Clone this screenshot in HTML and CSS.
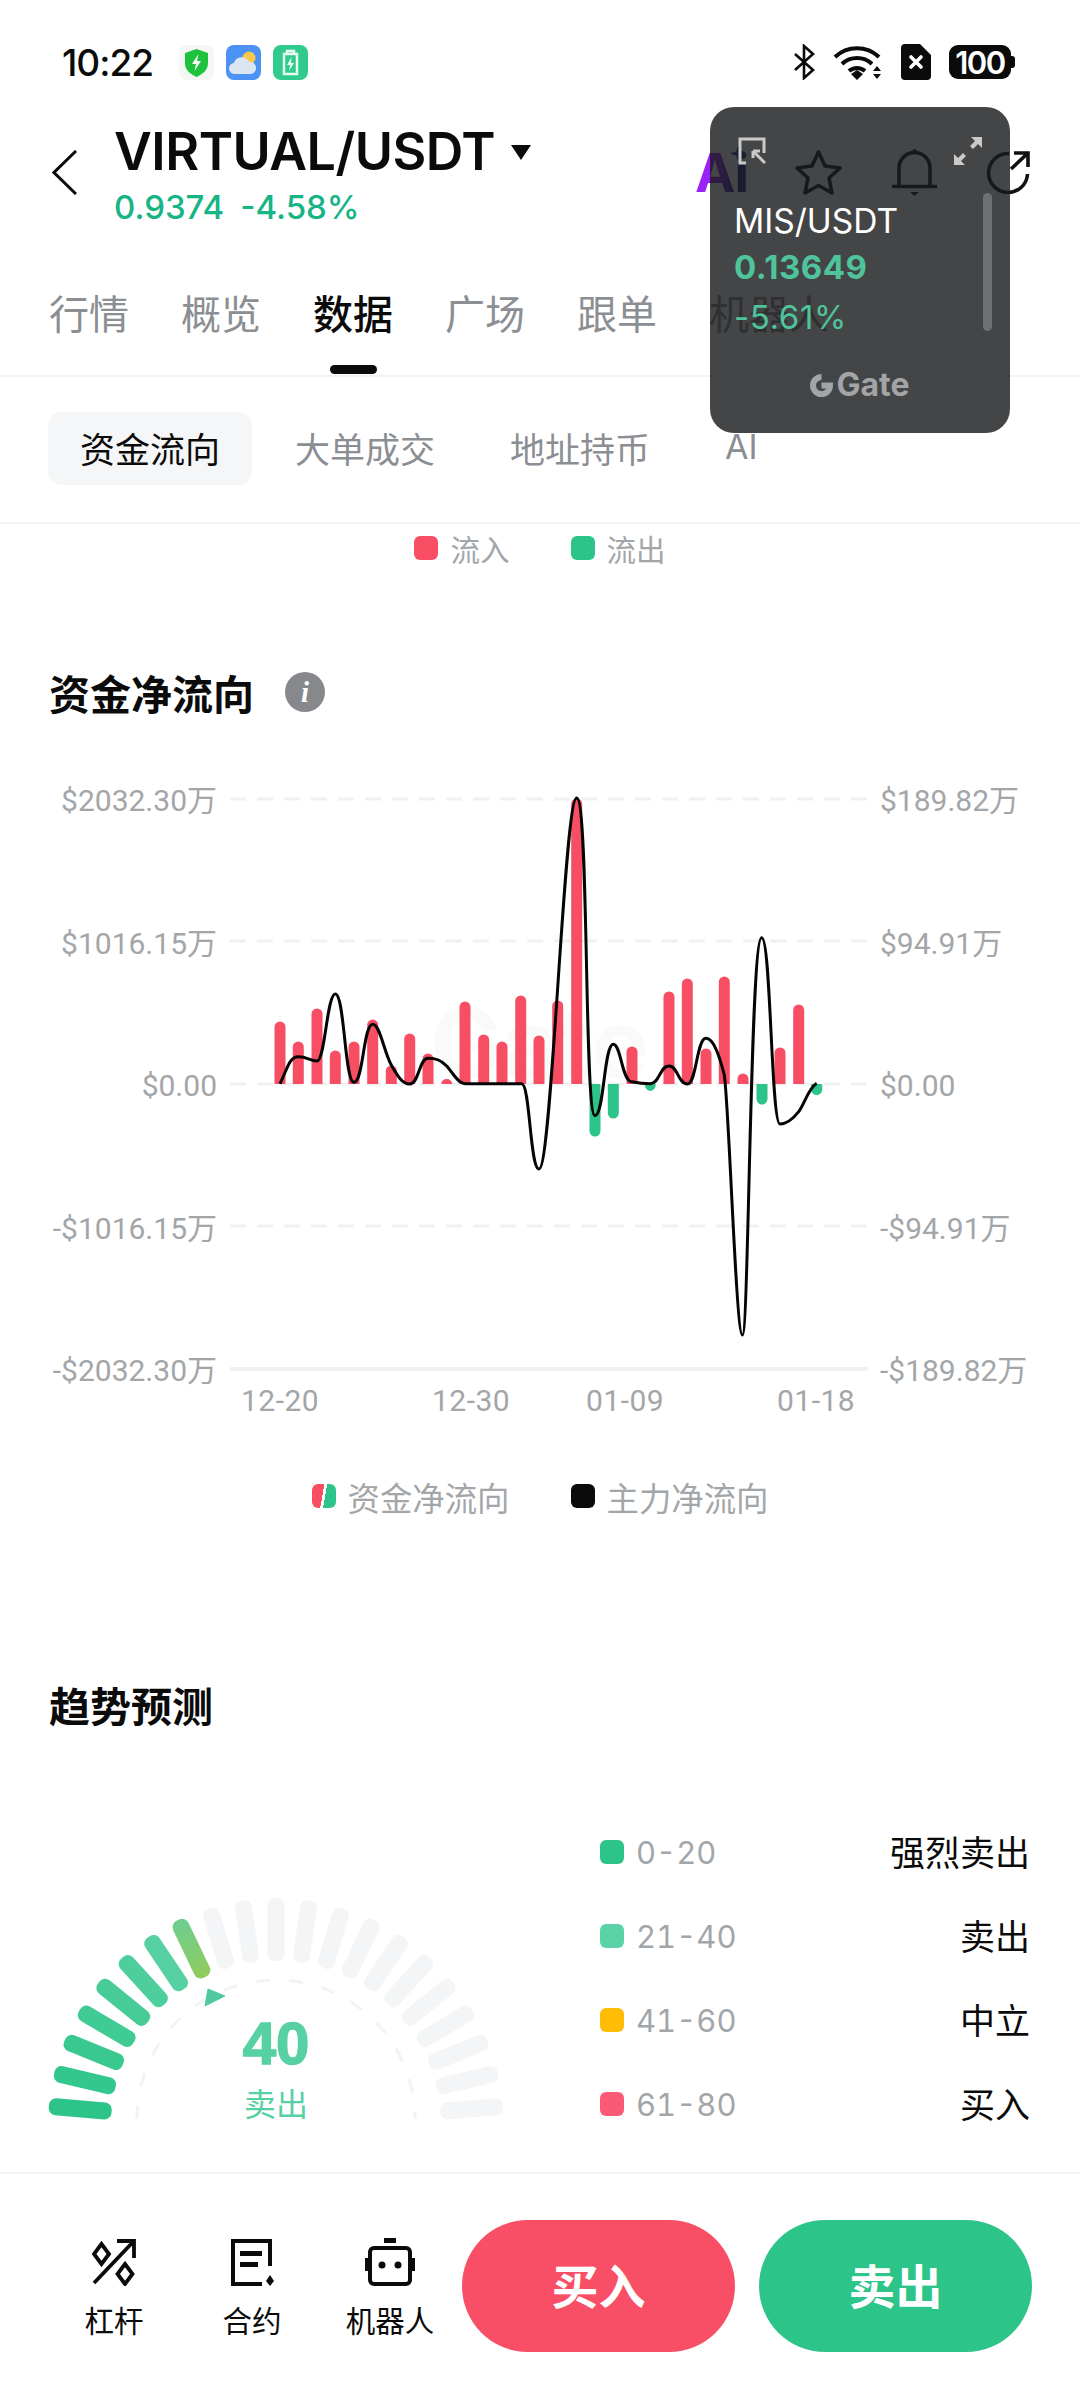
FILE: index.html
```html
<!DOCTYPE html>
<html lang="zh">
<head>
  <meta charset="UTF-8" />
  <title>VIRTUAL/USDT 数据</title>
  <link rel="stylesheet" href="styles.css">
</head>
<body>
<div class="page">
  <main class="content">
    <!-- Status bar -->
    <div class="status-bar">
      <span class="clock">10:22</span>
      <div class="app-icons">
        <svg class="tile" viewBox="0 0 35 35"><rect width="35" height="35" rx="8" fill="#f5f7f5"/><path d="M17.5 4 29 8v10c0 7-5 11-11.500 14C11 29 6 25 6 18V8z" fill="#1ec23c"/><path d="M19.500 9 13 19h4l-1.500 7L22 16h-4z" fill="#fff"/></svg>
        <svg class="tile" viewBox="0 0 35 35"><rect width="35" height="35" rx="8" fill="#4b92f4"/><circle cx="23" cy="13" r="6.500" fill="#fcc84c"/><path d="M9 29a5.500 5.500 0 0 1-1-11 8 8 0 0 1 15-1 6 6 0 0 1 2 12z" fill="#dce6f1"/></svg>
        <svg class="tile" viewBox="0 0 35 35"><rect width="35" height="35" rx="8" fill="#2fca8c"/><path d="M14 6h7v3h-7zM11 9h13v20H11z" fill="none" stroke="#e8fbf2" stroke-width="2.500"/><path d="M18.500 12 14 20h3l-1 6 5-8h-3z" fill="#e8fbf2"/></svg>
      </div>
      <div class="sys-icons">
        <svg width="22" height="36" viewBox="0 0 22 36" fill="none" stroke="#0b0b0b" stroke-width="2.600"><path d="M2 10l18 16-9 8V2l9 8L2 26"/></svg>
        <svg width="50" height="36" viewBox="0 0 50 36"><g fill="none" stroke="#0b0b0b" stroke-width="4"><path d="M2 13a32 32 0 0 1 44 0"/><path d="M9 20a22 22 0 0 1 30 0"/><path d="M16 27a12 12 0 0 1 16 0"/></g><path d="M24 36l-6-6 6-4 6 4zM44 22l4 5h-8zM44 35l-4-5h8z" fill="#0b0b0b"/></svg>
        <svg width="30" height="36" viewBox="0 0 30 36"><path d="M4 0h15l11 11v21a4 4 0 0 1-4 4H4a4 4 0 0 1-4-4V4a4 4 0 0 1 4-4z" fill="#0b0b0b"/><path d="M10 13l10 10M20 13 10 23" stroke="#fff" stroke-width="3.600" stroke-linecap="round"/></svg>
        <div class="battery"><span>100</span></div>
      </div>
    </div>

    <!-- Pair header -->
    <header class="pair-head">
      <svg class="back" width="25" height="45" viewBox="0 0 25 45" fill="none" stroke="#0b0b0b" stroke-width="3"><path d="M24 1 2 22.500 24 44"/></svg>
      <div class="pair-info">
        <div class="pair-name">VIRTUAL/USDT<i class="caret"></i></div>
        <div class="pair-price"><span>0.9374</span><span>-4.58%</span></div>
      </div>
      <div class="head-actions">
        <span class="ai-mark">Ai</span>
        <svg width="49" height="47" viewBox="0 0 49 47" fill="none" stroke="#111" stroke-width="3.600" stroke-linejoin="round"><path d="M24.500 3l6.500 14 15 2-11 10 3 15-13.500-7.500L11 44l3-15L3 19l15-2z"/></svg>
        <svg width="45" height="48" viewBox="0 0 45 48" fill="none" stroke="#111" stroke-width="3.600"><path d="M7 38V20a15.500 15.500 0 0 1 31 0v18M0 38.500h45"/><path d="M18 44h9l-4.500 4z" fill="#111" stroke="none"/><circle cx="22.500" cy="3" r="2" fill="#111" stroke="none"/></svg>
        <svg width="44" height="44" viewBox="0 0 44 44" fill="none" stroke="#111" stroke-width="3.600"><path d="M23 3.500A19.500 19.500 0 1 0 41.500 24"/><path d="M25 19 41 4M28 3h14v14"/></svg>
      </div>
    </header>

    <!-- Main tabs -->
    <nav class="tabs">
      <span class="tab">行情</span>
      <span class="tab">概览</span>
      <span class="tab tab-active">数据</span>
      <span class="tab">广场</span>
      <span class="tab">跟单</span>
      <span class="tab">机器人</span>
    </nav>

    <div class="subtabs">
      <span class="subtab subtab-active">资金流向</span>
      <span class="subtab">大单成交</span>
      <span class="subtab">地址持币</span>
      <span class="subtab subtab-ai">AI</span>
    </div>

    <div class="legend flow-legend">
      <span class="legend-item"><i class="swatch red"></i>流入</span>
      <span class="legend-item"><i class="swatch green"></i>流出</span>
    </div>

    <!-- Net flow chart -->
    <h2 class="section-title chart-title">资金净流向 <i class="info">i</i></h2>
    <section class="chart">
      <div class="axis axis-left">
        <span>$2032.30万</span>
        <span>$1016.15万</span>
        <span>$0.00</span>
        <span>-$1016.15万</span>
        <span>-$2032.30万</span>
      </div>
      <svg class="plot" width="638" height="660" viewBox="230 780 638 660">
        <text x="430" y="1078" class="watermark">Gate</text>
        <g class="grid">
          <path d="M230 799H868M230 941H868M230 1084H868M230 1226H868"/>
        </g>
        <path d="M230 1369H868" class="grid-base"/>
        <!-- inflow bars -->
        <g fill="#f84e64">
          <path d="M274.500 1084v-57a5.500 5.500 0 0 1 11 0v57z"/>
          <path d="M292.800 1084v-37a5.500 5.500 0 0 1 11 0v37z"/>
          <path d="M311.500 1084v-70a5.500 5.500 0 0 1 11 0v70z"/>
          <path d="M329.800 1084v-28a5.500 5.500 0 0 1 11 0v28z"/>
          <path d="M348.500 1084v-37a5.500 5.500 0 0 1 11 0v37z"/>
          <path d="M367.200 1084v-59a5.500 5.500 0 0 1 11 0v59z"/>
          <path d="M385.800 1084v-13a5.500 5.500 0 0 1 11 0v13z"/>
          <path d="M404.200 1084v-45a5.500 5.500 0 0 1 11 0v45z"/>
          <path d="M422.500 1084v-25a5.500 5.500 0 0 1 11 0v25z"/>
          <path d="M441.200 1084a5.500 5 0 0 1 11 0z"/>
          <path d="M459.500 1084v-77a5.500 5.500 0 0 1 11 0v77z"/>
          <path d="M478.200 1084v-44a5.500 5.500 0 0 1 11 0v44z"/>
          <path d="M496.500 1084v-37a5.500 5.500 0 0 1 11 0v37z"/>
          <path d="M515.200 1084v-83a5.500 5.500 0 0 1 11 0v83z"/>
          <path d="M533.500 1084v-43a5.500 5.500 0 0 1 11 0v43z"/>
          <path d="M552.200 1084v-78a5.500 5.500 0 0 1 11 0v78z"/>
          <path d="M571.200 1084V804a5.500 5.500 0 0 1 11 0v280z"/>
          <path d="M626.500 1084v-32a5.500 5.500 0 0 1 11 0v32z"/>
          <path d="M663.500 1084v-87a5.500 5.500 0 0 1 11 0v87z"/>
          <path d="M681.800 1084v-100a5.500 5.500 0 0 1 11 0v100z"/>
          <path d="M700.500 1084v-30a5.500 5.500 0 0 1 11 0v30z"/>
          <path d="M718.800 1084V982a5.500 5.500 0 0 1 11 0v102z"/>
          <path d="M737.500 1084v-5a5.500 5.500 0 0 1 11 0v5z"/>
          <path d="M774.500 1084v-31a5.500 5.500 0 0 1 11 0v31z"/>
          <path d="M793.200 1084v-74a5.500 5.500 0 0 1 11 0v74z"/>
        </g>
        <!-- outflow bars -->
        <g fill="#2dc48a">
          <path d="M589.500 1084v47a5.500 5.500 0 0 0 11 0v-47z"/>
          <path d="M607.800 1084v29a5.500 5.500 0 0 0 11 0v-29z"/>
          <path d="M644.800 1084a5.500 7 0 0 0 11 0z"/>
          <path d="M756.500 1084v15a5.500 5.500 0 0 0 11 0v-15z"/>
          <path d="M811.200 1084v5.500a5.500 5.500 0 0 0 11 0v-5.500z"/>
        </g>
        <path class="flow-line" d="M280 1083.700C287 1070 289 1056.700 298.300 1056.700C307.600 1056.700 310 1061 317 1061C325 1061 327 994 335.300 994C344.600 994 344.600 1082.300 354 1082.300C363.300 1082.300 363.300 1024.300 372.700 1024.300C380 1024.300 384 1052 391.300 1065C397 1075 402 1084 409.700 1084C419 1084 419 1058.300 428 1058.300C436 1058.300 441 1060 446.700 1066C453 1073 458 1083.700 465 1083.700L521.700 1083.700C530 1083.700 530 1169 539 1169C552 1169 564 798 576.700 798C589 798 584 1115.700 595 1115.700C604 1115.700 604 1044.300 613.300 1044.300C621 1044.300 622 1081.700 631.700 1081.700C638 1083 644 1083.700 650.300 1083.700C659.600 1083.700 659.600 1066 669 1066C678 1066 678 1084 687.300 1084C696.600 1084 696.600 1038.300 706 1038.300C714 1038.300 720 1058 724.300 1075C729 1105 736 1335 742.400 1335C749 1335 750 937.700 761.700 937.700C771 937.700 771 1124 780 1124C786 1124 793 1119 798.700 1111.700C805 1103 808 1089 816.700 1083.300"/>
        <text x="241" y="1411" class="x-label">12-20</text>
        <text x="432" y="1411" class="x-label">12-30</text>
        <text x="586" y="1411" class="x-label">01-09</text>
        <text x="777" y="1411" class="x-label">01-18</text>
      </svg>
      <div class="axis axis-right">
        <span>$189.82万</span>
        <span>$94.91万</span>
        <span>$0.00</span>
        <span>-$94.91万</span>
        <span>-$189.82万</span>
      </div>
    </section>

    <div class="legend chart-legend">
      <span class="legend-item"><i class="swatch split"></i>资金净流向</span>
      <span class="legend-item"><i class="swatch black"></i>主力净流向</span>
    </div>

    <!-- Trend forecast -->
    <h2 class="section-title trend-title">趋势预测</h2>
    <section class="trend">
      <svg class="gauge" width="520" height="290" viewBox="0 0 520 290">
        <defs>
          <rect id="tick" x="-8.500" y="-228" width="17" height="63" rx="7"/>
          <linearGradient id="tickEnd" x1="0" y1="0" x2="0" y2="1">
            <stop offset="0" stop-color="#6dce90"/>
            <stop offset="1" stop-color="#90cb5c"/>
          </linearGradient>
        </defs>
        <path class="gauge-dash" d="M117 268A139 139 0 0 1 395 268"/>
        <g transform="translate(256 275)">
          <use href="#tick" fill="#2dc48a" transform="rotate(-85)"/>
          <use href="#tick" fill="#33c68d" transform="rotate(-76.500)"/>
          <use href="#tick" fill="#39c890" transform="rotate(-68)"/>
          <use href="#tick" fill="#40ca94" transform="rotate(-59.500)"/>
          <use href="#tick" fill="#47cc98" transform="rotate(-51)"/>
          <use href="#tick" fill="#4ece9c" transform="rotate(-42.500)"/>
          <use href="#tick" fill="#57d1a3" transform="rotate(-34)"/>
          <use href="#tick" fill="url(#tickEnd)" transform="rotate(-25.500)"/>
          <g fill="#f4f5f6">
            <use href="#tick" transform="rotate(-17)"/>
            <use href="#tick" transform="rotate(-8.500)"/>
            <use href="#tick"/>
            <use href="#tick" transform="rotate(8.500)"/>
            <use href="#tick" transform="rotate(17)"/>
            <use href="#tick" transform="rotate(25.500)"/>
            <use href="#tick" transform="rotate(34)"/>
            <use href="#tick" transform="rotate(42.500)"/>
            <use href="#tick" transform="rotate(51)"/>
            <use href="#tick" transform="rotate(59.500)"/>
            <use href="#tick" transform="rotate(68)"/>
            <use href="#tick" transform="rotate(76.500)"/>
            <use href="#tick" transform="rotate(85)"/>
          </g>
        </g>
        <path d="M185 155l3-17 17 7z" fill="#50c9a0" stroke="#50c9a0" stroke-width="1" stroke-linejoin="round"/>
        <text x="256" y="213" class="gauge-value">40</text>
        <text x="256" y="265" class="gauge-label">卖出</text>
      </svg>
      <ul class="levels">
        <li><i class="swatch green"></i><span class="range">0-20</span><span class="level">强烈卖出</span></li>
        <li><i class="swatch mint"></i><span class="range">21-40</span><span class="level">卖出</span></li>
        <li><i class="swatch amber"></i><span class="range">41-60</span><span class="level">中立</span></li>
        <li><i class="swatch rose"></i><span class="range">61-80</span><span class="level">买入</span></li>
        <li><i class="swatch red"></i><span class="range">81-100</span><span class="level">强烈买入</span></li>
      </ul>
    </section>
  </main>

  <!-- Bottom action bar -->
  <footer class="action-bar">
    <div class="tool">
      <svg width="46" height="48" viewBox="0 0 46 48" fill="none" stroke="#0b0b0b" stroke-width="3.800"><path d="M3 45 42 4M26 3h17v17"/><path d="M10.500 6l7.500 10-7.500 10L3 16zM34 26l7.500 10L34 46l-7.500-10z"/></svg>
      <span>杠杆</span>
    </div>
    <div class="tool">
      <svg width="46" height="48" viewBox="0 0 46 48"><path d="M41 28V3H4v43h29" fill="none" stroke="#0b0b0b" stroke-width="4"/><path d="M11 13h22v5H11zM11 24h18v5H11zM41 37l4 6-4 5-4-5z" fill="#0b0b0b"/></svg>
      <span>合约</span>
    </div>
    <div class="tool">
      <svg width="50" height="48" viewBox="0 0 50 48"><rect x="5" y="10" width="40" height="36" rx="4" fill="none" stroke="#0b0b0b" stroke-width="4"/><path d="M19 0h12v5H19zM0 20h3v13H0zM47 20h3v13h-3z" fill="#0b0b0b"/><circle cx="17" cy="27" r="3.500" fill="#0b0b0b"/><circle cx="33" cy="27" r="3.500" fill="#0b0b0b"/></svg>
      <span>机器人</span>
    </div>
    <button class="trade-btn buy">买入</button>
    <button class="trade-btn sell">卖出</button>
  </footer>

  <!-- Floating mini ticker -->
  <aside class="mini-ticker">
    <div class="mini-icons">
      <svg width="28" height="28" viewBox="0 0 28 28" fill="none" stroke="#c9c9ca" stroke-width="3"><path d="M8 26H2V2h24v14"/><path d="M15 14h7M15 14v7M15 14l12 12"/></svg>
      <svg width="28" height="28" viewBox="0 0 28 28" fill="#c9c9ca"><path d="M17 0h11v11l-4-4-5 5-3-3 5-5zM0 28V17l4 4 5-5 3 3-5 5 4 4z"/></svg>
    </div>
    <div class="mini-pair">MIS/USDT</div>
    <div class="mini-price">0.13649</div>
    <div class="mini-change">-5.61%</div>
    <i class="mini-scroll"></i>
    <div class="mini-brand">
      <svg width="23" height="23" viewBox="0 0 23 23" fill="none" stroke="#a2a4a6" stroke-width="6"><path d="M11.500 3a8.500 8.500 0 1 0 8.500 8.500h-8.500"/></svg>
      <span>Gate</span>
    </div>
  </aside>
</div>
</body>
</html>
```

FILE: styles.css
```css
* { box-sizing: border-box; }

body {
  margin: 0;
  background: #fff;
  font-family: Inter, "Noto Sans CJK SC", sans-serif;
  color: #0b0b0b;
}

.page {
  position: relative;
  width: 1080px;
  height: 2400px;
  display: flex;
  flex-direction: column;
  overflow: hidden;
}

.content {
  flex: 1;
  min-height: 0;
  overflow: hidden;
}

/* status bar */
.status-bar {
  height: 124px;
  display: flex;
  align-items: center;
  padding: 0 66px 0 62px;
}
.clock {
  font-size: 37px;
  font-weight: 500;
  letter-spacing: -1px;
}
.app-icons {
  display: flex;
  gap: 12px;
  margin-left: 26px;
}
.tile {
  width: 35px;
  height: 35px;
}
.sys-icons {
  display: flex;
  align-items: center;
  gap: 18px;
  margin-left: auto;
}
.battery {
  position: relative;
  width: 62px;
  height: 34px;
  margin-right: 3px;
  background: #0b0b0b;
  border-radius: 9px;
  display: flex;
  align-items: center;
  justify-content: center;
  color: #fff;
  font-size: 31px;
  font-weight: 600;
  letter-spacing: -1.500px;
}
.battery::after {
  content: "";
  position: absolute;
  right: -4px;
  top: 11px;
  width: 4px;
  height: 12px;
  border-radius: 0 3px 3px 0;
  background: #0b0b0b;
}

/* pair header */
.pair-head {
  height: 146px;
  display: flex;
  padding-left: 52px;
}
.back {
  margin: 26px 38px 0 0;
}
.pair-name {
  display: flex;
  align-items: center;
  height: 54px;
  font-size: 52px;
  font-weight: 600;
  letter-spacing: -0.5px;
  margin-left: -1px;
}
.caret {
  width: 0;
  height: 0;
  margin: 2px 0 0 16px;
  border-left: 10px solid transparent;
  border-right: 10px solid transparent;
  border-top: 15px solid #0b0b0b;
}
.pair-price {
  display: flex;
  gap: 16px;
  margin: 11px 0 0 -1px;
  color: #17b486;
  font-size: 33px;
  font-weight: 500;
  line-height: 36px;
}
.head-actions {
  display: flex;
  align-items: center;
  gap: 49px;
  height: 96px;
  margin-left: auto;
  padding-right: 50px;
}
.ai-mark {
  position: relative;
  width: 52px;
  margin-right: -2px;
  font-size: 54px;
  font-weight: 700;
  letter-spacing: -1px;
  background: linear-gradient(90deg, #9a22f8 45%, #1c2f9a 75%);
  -webkit-background-clip: text;
  background-clip: text;
  color: transparent;
}
.ai-mark::after {
  content: "";
  position: absolute;
  left: 35px;
  top: 6px;
  width: 16px;
  height: 16px;
  background: #2a3fb0;
  clip-path: polygon(50% 0, 62% 38%, 100% 50%, 62% 62%, 50% 100%, 38% 62%, 0 50%, 38% 38%);
}

/* main tabs */
.tabs {
  height: 107px;
  display: flex;
  gap: 52px;
  padding: 15px 0 0 49px;
  border-bottom: 2px solid #f1f2f3;
}
.tab {
  position: relative;
  height: 60px;
  font-size: 40px;
  line-height: 60px;
  color: #8b8e92;
}
.tab-active {
  color: #0b0b0b;
  font-weight: 500;
}
.tab-active::after {
  content: "";
  position: absolute;
  left: 17px;
  top: 80px;
  width: 47px;
  height: 9px;
  border-radius: 5px;
  background: #0b0b0b;
}

.subtabs {
  height: 147px;
  display: flex;
  align-items: flex-start;
  gap: 11px;
  padding: 35px 0 0 48px;
  border-bottom: 2px solid #f4f5f6;
}
.subtab {
  height: 73px;
  padding: 0 32px;
  border-radius: 14px;
  font-size: 35px;
  line-height: 76px;
  color: #8b8e92;
}
.subtab-active {
  background: #f5f6f7;
  color: #0b0b0b;
}
.subtab-ai {
  font-size: 34px;
  line-height: 70px;
}

/* legends */
.legend {
  display: flex;
  justify-content: center;
  gap: 61px;
  height: 50px;
  align-items: center;
  color: #a3a6a9;
}
.legend-item {
  display: flex;
  align-items: center;
  gap: 12px;
}
.flow-legend {
  height: 48px;
  font-size: 29.500px;
}
.chart-legend {
  margin-top: 36px;
  height: 40px;
  font-size: 32.400px;
}
.swatch {
  flex: none;
  display: block;
  width: 24px;
  height: 24px;
  border-radius: 6px;
}
.red { background: #f84e64; }
.green { background: #2dc48a; }
.mint { background: #5cd3a6; }
.amber { background: #ffbd05; }
.rose { background: #fb5a74; }
.black { background: #0b0b0b; }
.split { background: linear-gradient(100deg, #f84e64 0 44%, #fff 44% 54%, #2dc48a 54%); }

.section-title {
  display: flex;
  align-items: center;
  height: 50px;
  margin: 0;
  padding-left: 49px;
  font-size: 41px;
  font-weight: 600;
}
.chart-title { margin-top: 95px; }
.trend-title { margin-top: 163px; }
.info {
  width: 40px;
  height: 40px;
  margin-left: 31px;
  border-radius: 50%;
  background: #86888c;
  color: #fff;
  font: italic 700 29px/40px "Liberation Serif", serif;
  text-align: center;
}

/* net flow chart */
.chart {
  display: flex;
  align-items: flex-start;
  margin-top: 63px;
}
.axis {
  height: 612px;
  display: flex;
  flex-direction: column;
  justify-content: space-between;
  font-family: Roboto, "Noto Sans CJK SC", sans-serif;
  font-size: 30px;
  line-height: 42px;
  color: #a3a6a9;
}
.axis-left {
  width: 217px;
  text-align: right;
}
.axis-right {
  margin-left: 12px;
}
.plot {
  display: block;
  flex: none;
  margin-left: 13px;
}
.grid path {
  fill: none;
  stroke: #f0f1f2;
  stroke-width: 3;
  stroke-dasharray: 16 11;
}
.grid-base {
  fill: none;
  stroke: #f0f1f2;
  stroke-width: 4;
}
.flow-line {
  fill: none;
  stroke: #050505;
  stroke-width: 3;
  stroke-linejoin: round;
}
.x-label {
  font-family: Roboto, sans-serif;
  font-size: 30px;
  letter-spacing: 0.5px;
  fill: #a3a6a9;
}
.watermark {
  font-size: 96px;
  font-weight: 700;
  fill: #f9fafa;
}

/* trend forecast */
.trend {
  display: flex;
  align-items: flex-start;
}
.gauge {
  display: block;
  flex: none;
  margin: 122px 0 0 20px;
}
.gauge-dash {
  fill: none;
  stroke: #f2f3f4;
  stroke-width: 3;
  stroke-dasharray: 14 19;
}
.gauge-value {
  font-family: "Liberation Sans", sans-serif;
  font-size: 60px;
  font-weight: 700;
  fill: #57d1a3;
  stroke: #57d1a3;
  stroke-width: 1.500;
  text-anchor: middle;
}
.gauge-label {
  font-size: 32px;
  fill: #57d1a3;
  text-anchor: middle;
}
.levels {
  width: 430px;
  margin: 81px 0 0 60px;
  padding: 0;
  list-style: none;
}
.levels li {
  display: flex;
  align-items: center;
  gap: 12px;
  height: 84px;
}
.range {
  font-size: 31px;
  font-variant-numeric: tabular-nums;
  color: #a3a6a9;
}
.level {
  margin: 0 0 3px auto;
  font-size: 35px;
}

/* bottom action bar */
.action-bar {
  flex: none;
  height: 228px;
  display: flex;
  align-items: flex-start;
  padding: 46px 0 0 45px;
  border-top: 2px solid #f1f2f3;
  background: #fff;
}
.tool {
  width: 138px;
  display: flex;
  flex-direction: column;
  align-items: center;
  gap: 18px;
  margin-top: 18px;
  font-size: 29.500px;
  line-height: 34px;
}
.tool svg { display: block; }
.trade-btn {
  width: 273px;
  height: 132px;
  padding: 0 0 5px;
  border: 0;
  border-radius: 66px;
  color: #fff;
  font-family: inherit;
  font-size: 47px;
  font-weight: 700;
}
.buy {
  margin-left: 3px;
  background: #f94f66;
}
.sell {
  margin-left: 24px;
  background: #2dc48a;
}

/* floating ticker */
.mini-ticker {
  position: absolute;
  left: 710px;
  top: 107px;
  width: 300px;
  height: 326px;
  padding: 30px 28px 0 24px;
  border-radius: 24px;
  background: rgba(25, 26, 27, 0.81);
}
.mini-icons {
  display: flex;
  justify-content: space-between;
  margin-left: 4px;
  height: 28px;
}
.mini-pair {
  margin-top: 32px;
  font-size: 33.500px;
  line-height: 48px;
  color: #fff;
}
.mini-price {
  font-size: 33px;
  font-weight: 700;
  line-height: 44px;
  letter-spacing: 0.5px;
  color: #4fc49c;
}
.mini-change {
  margin-top: 4px;
  font-size: 33px;
  line-height: 48px;
  letter-spacing: 0.6px;
  color: #4fc49c;
}
.mini-scroll {
  position: absolute;
  left: 273px;
  top: 86px;
  width: 9px;
  height: 138px;
  border-radius: 5px;
  background: #6f7072;
}
.mini-brand {
  position: absolute;
  left: 0;
  right: 0;
  top: 266px;
  display: flex;
  align-items: center;
  justify-content: center;
  gap: 3px;
  color: #a2a4a6;
  font-size: 32px;
  font-weight: 700;
  line-height: 24px;
}
```
